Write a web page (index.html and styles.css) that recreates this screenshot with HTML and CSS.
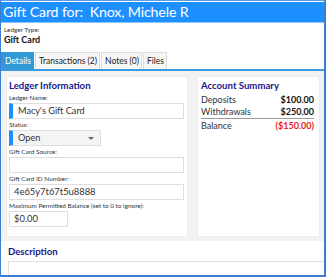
FILE: index.html
```html
<!DOCTYPE html>
<html>
<head>
<meta charset="utf-8">
<link rel="stylesheet" href="styles.css">
</head>
<body>
<div class="frame">
  <div class="header">Gift Card for:&nbsp; Knox, Michele R</div>
  <div class="ledger-type">
    <div class="small-label">Ledger Type:</div>
    <div class="type-value">Gift Card</div>
  </div>
  <div class="tabs">
    <div class="tab active">Details</div>
    <div class="tab">Transactions (2)</div>
    <div class="tab">Notes (0)</div>
    <div class="tab">Files</div>
  </div>
  <div class="content">
    <div class="panel left">
      <div class="panel-title">Ledger Information</div>
      <div class="field">
        <div class="small-label">Ledger Name:</div>
        <div class="input required">Macy's Gift Card</div>
      </div>
      <div class="field">
        <div class="small-label">Status:</div>
        <div class="input required select">Open<span class="caret"></span></div>
      </div>
      <div class="field">
        <div class="small-label">Gift Card Source:</div>
        <div class="input"></div>
      </div>
      <div class="field">
        <div class="small-label">Gift Card ID Number:</div>
        <div class="input">4e65y7t67t5u8888</div>
      </div>
      <div class="field">
        <div class="small-label">Maximum Permitted Balance (set to 0 to ignore):</div>
        <div class="input money">$0.00</div>
      </div>
    </div>
    <div class="panel right">
      <div class="panel-title">Account Summary</div>
      <div class="sum-row"><span>Deposits</span><span class="amt">$100.00</span></div>
      <div class="sum-row underline"><span>Withdrawals</span><span class="amt">$250.00</span></div>
      <div class="sum-row"><span>Balance</span><span class="amt neg">($150.00)</span></div>
    </div>
  </div>
  <div class="description">
    <div class="panel-title">Description</div>
    <div class="desc-box"></div>
  </div>
</div>
</body>
</html>
```
FILE: styles.css
```css
* { box-sizing: border-box; }
html, body { margin: 0; padding: 0; background: #fff; }
body { font-family: "Lato", "Open Sans", sans-serif; color: #222; }
.frame {
  width: 326px;
  height: 277px;
  overflow: hidden;
  border-style: solid;
  border-color: #3b7dd3;
  border-width: 1px 2px 2px 1px;
  border-top-color: #5a9ae6;
}
.header {
  height: 21px;
  margin-top: 1px;
  background: #1e8fff;
  border-bottom: 1px solid #8ec6ff;
  color: #fff;
  font-size: 14.2px;
  letter-spacing: -0.15px;
  line-height: 19px;
  padding-left: 2px;
  white-space: nowrap;
}
.ledger-type { padding: 3px 3px 0; height: 29px; }
.small-label { font-size: 6.4px; color: #333; line-height: 8px; }
.type-value { font-size: 9px; font-weight: 700; color: #111; line-height: 12px; }
.tabs {
  display: flex;
  height: 19px;
  border-bottom: 2px solid #3a9be0;
}
.tab {
  font-size: 8.5px;
  line-height: 16px;
  padding: 0 2px 0 3px;
  background: #f6f6f6;
  border: 1px solid #dcdcdc;
  border-bottom: none;
  color: #222;
  margin-right: 1px;
}
.tab.active { background: #2f9ad6; color: #fff; border-color: #2f9ad6; margin-left: -1px; padding-left: 4px; }
.content {
  display: flex;
  gap: 9px;
  background: #f2f2f2;
  padding: 5px 4px 4px 5px;
  height: 170px;
}
.panel { background: #fff; border: 1px solid #ececec; }
.panel.left { width: 182px; padding: 3px 3px 0 2px; }
.panel.right { flex: 1; padding: 3px 5px 0 3px; }
.panel-title { font-size: 9.6px; font-weight: 700; color: #16168a; line-height: 12px; margin-bottom: 2px; }
.field { margin-top: 2px; }
.field .small-label { margin-bottom: 1px; }
.input {
  height: 16px;
  border: 1px solid #dedede;
  font-size: 9.4px;
  line-height: 14px;
  padding-left: 4px;
  color: #333;
  background: #fff;
}
.input.required { border-left: 4px solid #1e8fff; padding-left: 5px; font-size: 9.2px; }
.select { width: 92px; background: #f4f4f4; position: relative; font-size: 10px; }
.caret {
  position: absolute;
  right: 6px;
  top: 6px;
  border-left: 3px solid transparent;
  border-right: 3px solid transparent;
  border-top: 3px solid #666;
}
.money { width: 59px; }
.sum-row {
  display: flex;
  justify-content: space-between;
  font-size: 9px;
  line-height: 12px;
  color: #333;
}
.sum-row.underline { border-bottom: 1px solid #999; margin-bottom: 1px; }
.amt { font-weight: 700; color: #111; }
.amt.neg { color: #e51b1b; }
.description { padding: 5px 0 0 7px; }
.description .panel-title { margin-bottom: 3px; }
.desc-box { height: 20px; border: 1px solid #e0e0e0; border-right: none; }
```
